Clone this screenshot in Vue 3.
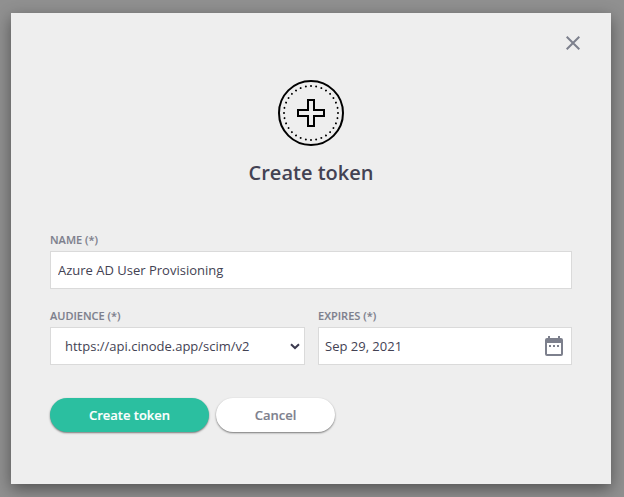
<script setup>
import { ref } from 'vue'

const name = ref('Azure AD User Provisioning')
const audience = ref('https://api.cinode.app/scim/v2')
const expires = ref('Sep 29, 2021')
</script>

<template>
  <div class="backdrop">
    <form class="dialog" @submit.prevent>
      <button class="close" type="button" aria-label="Close">
        <svg width="14" height="14" viewBox="0 0 14 14">
          <path d="M0.7 0.7L13.3 13.3M13.3 0.7L0.7 13.3" fill="none" stroke="#7d808d" stroke-width="2" />
        </svg>
      </button>
      <header class="head">
        <svg class="emblem" width="66" height="66" viewBox="0 0 66 66" fill="none" stroke="#000">
          <circle cx="33" cy="33" r="32" stroke-width="2" />
          <circle cx="33" cy="33" r="27" stroke-width="2" stroke-linecap="round" pathLength="320" stroke-dasharray="0.01 9.99" />
          <path d="M30 20h6v10h10v6H36v10h-6V36H20v-6h10z" stroke-width="2" />
        </svg>
        <h1>Create token</h1>
      </header>
      <div class="fields">
        <label class="field wide">
          <span class="label">NAME (*)</span>
          <input v-model="name" class="control" type="text" />
        </label>
        <label class="field">
          <span class="label">AUDIENCE (*)</span>
          <span class="control select">
            <span class="audience">{{ audience }}</span>
            <svg width="10" height="7" viewBox="0 0 10 7">
              <path d="M1 1.2L5 5L9 1.2" fill="none" stroke="#3b3a4e" stroke-width="2" />
            </svg>
          </span>
        </label>
        <label class="field">
          <span class="label">EXPIRES (*)</span>
          <span class="control date">
            <span>{{ expires }}</span>
            <svg width="18" height="20" viewBox="0 0 18 20" fill="#7d808d">
              <path fill-rule="evenodd" d="M3 0h2v2h8V0h2v2h1a2 2 0 0 1 2 2v14a2 2 0 0 1-2 2H2a2 2 0 0 1-2-2V4a2 2 0 0 1 2-2h1zM2 7v11h14V7z" />
              <path d="M4 9h2v2H4zM8 9h2v2H8zM12 9h2v2h-2z" />
            </svg>
          </span>
        </label>
      </div>
      <footer class="actions">
        <button class="btn primary" type="submit">Create token</button>
        <button class="btn cancel" type="button">Cancel</button>
      </footer>
    </form>
  </div>
</template>

<style>
body {
  margin: 0;
  overflow: hidden;
}
</style>

<style scoped>
.backdrop {
  box-sizing: border-box;
  width: 624px;
  height: 497px;
  padding: 13px 13px 13px 11px;
  background: #909090;
  overflow: hidden;
  font-family: "Open Sans", sans-serif;
  color: #434253;
}
.dialog {
  box-sizing: border-box;
  position: relative;
  width: 600px;
  height: 471px;
  padding: 67px 39px 0;
  background: #eee;
  box-shadow: 0 5px 15px rgba(0, 0, 0, 0.43);
}
.close {
  position: absolute;
  top: 23px;
  right: 31px;
  display: flex;
  padding: 0;
  border: 0;
  background: none;
}
.head {
  display: flex;
  flex-direction: column;
  align-items: center;
}
h1 {
  margin: 13px 0 0;
  font-size: 20px;
  line-height: 28px;
  font-weight: 600;
}
.fields {
  display: grid;
  grid-template-columns: 255px 254px;
  gap: 18px 13px;
  margin-top: 44px;
}
.field {
  display: flex;
  flex-direction: column;
}
.wide {
  grid-column: 1 / 3;
}
.label {
  height: 20px;
  font-size: 11px;
  line-height: 18px;
  font-weight: 600;
  color: #7d808d;
  -webkit-text-stroke: 0.1px #7d808d;
}
.control {
  box-sizing: border-box;
  display: flex;
  align-items: center;
  justify-content: space-between;
  width: 100%;
  height: 38px;
  padding: 0 7px;
  border: 1px solid #dadada;
  border-radius: 0;
  outline: 0;
  background: #fff;
  font: 400 13px/18px "Open Sans", sans-serif;
  color: #434253;
  -webkit-text-stroke: 0;
}
.select {
  padding: 0 4px 0 14px;
}
.date {
  padding: 0 8px 0 6px;
}
.actions {
  display: flex;
  gap: 7px;
  margin-top: 33px;
}
.btn {
  height: 34px;
  padding: 0;
  border: 0;
  border-radius: 17px;
  font: 600 13px/34px "Open Sans", sans-serif;
  -webkit-text-stroke: 0.15px currentColor;
  box-shadow: 0 1px 2px rgba(0, 0, 0, 0.5);
}
.primary {
  width: 159px;
  background: #2bbfa0;
  color: #fff;
}
.cancel {
  width: 119px;
  background: #fff;
  color: #7d808d;
}
</style>
